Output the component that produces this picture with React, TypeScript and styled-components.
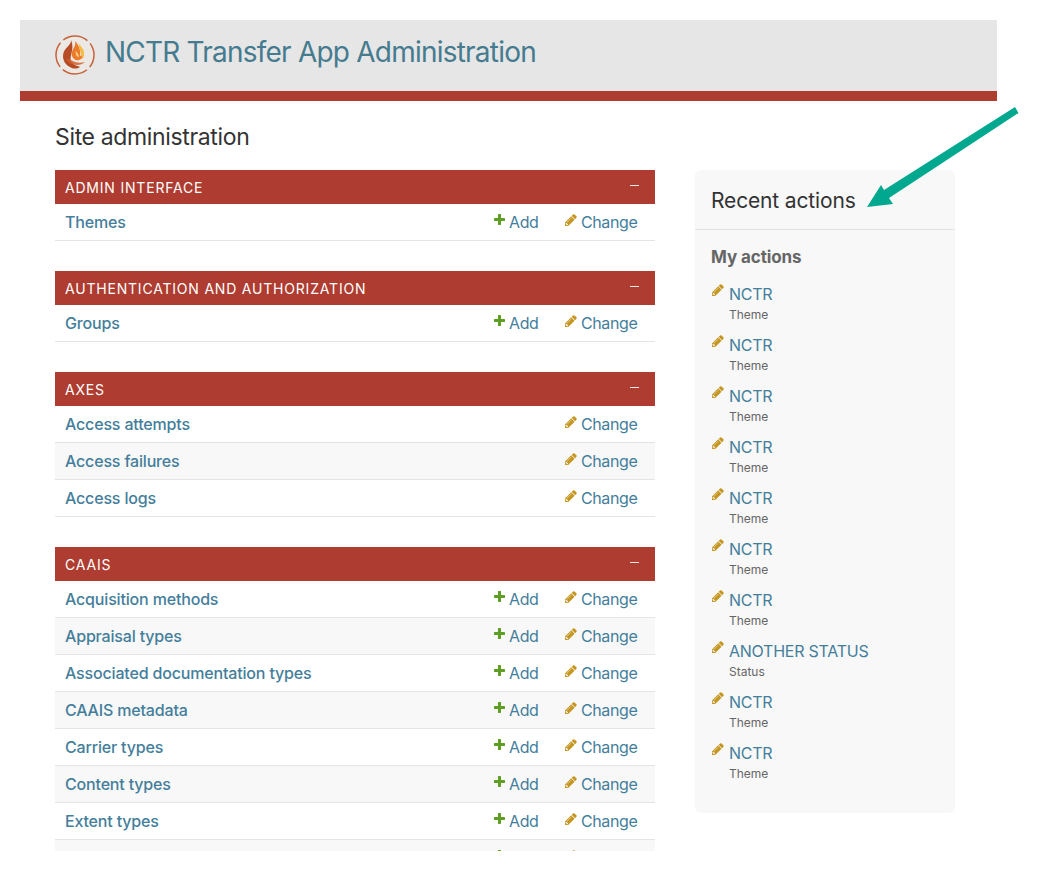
import React from "react";
import styled, { createGlobalStyle } from "styled-components";

const Global = createGlobalStyle`
  html, body { margin: 0; padding: 0; background: #fff; }
  body { font-family: Inter, "Liberation Sans", sans-serif; color: #333; }
  * { box-sizing: border-box; }
`;

const Page = styled.div`
  position: relative;
  width: 1037px;
  height: 871px;
  padding: 20px 40px 20px 20px;
  overflow: hidden;
`;
const Frame = styled.div`
  height: 831px;
  overflow: hidden;
`;
const Header = styled.header`
  height: 81px;
  background: #e6e6e6;
  border-bottom: 10px solid #ae3c30;
  padding: 0 35px;
  display: flex;
  align-items: center;
  gap: 10px;
`;
const Brand = styled.h1`
  margin: -7px 0 0;
  font-size: 28px;
  font-weight: 400;
  letter-spacing: -0.78px;
  color: #457b8f;
  white-space: nowrap;
`;
const LogoMark = styled.svg`
  flex: none;
  margin-top: -1px;
`;
const Content = styled.div`
  padding: 0 35px;
`;
const PageTitle = styled.h2`
  margin: 0;
  height: 69px;
  padding-top: 21px;
  font-size: 23px;
  line-height: 30px;
  font-weight: 400;
  letter-spacing: -0.35px;
  color: #333;
`;
const Columns = styled.div`
  display: flex;
  align-items: flex-start;
  gap: 40px;
`;
const Main = styled.main`
  width: 600px;
  display: flex;
  flex-direction: column;
  gap: 30px;
`;
const ModuleCaption = styled.div`
  height: 34px;
  background: #ae3c30;
  color: #fff;
  padding: 0 10px;
  display: flex;
  align-items: center;
  justify-content: space-between;
  font-size: 14px;
  letter-spacing: 0.8px;
  text-transform: uppercase;
  font-weight: 400;
`;
const Collapse = styled.span`
  width: 9px;
  height: 1px;
  background: #fbe9e6;
  margin-right: 6px;
  margin-top: -3px;
`;
const Row = styled.div<{ $alt: boolean }>`
  height: 37px;
  display: flex;
  align-items: center;
  padding: 0 18px 0 10px;
  background: ${(p) => (p.$alt ? "#f8f8f8" : "#fff")};
  border-bottom: 1px solid #e4e4e4;
  font-size: 16px;
  color: #447e9b;
`;
const RowName = styled.span`
  flex: 1;
  font-weight: 500;
  letter-spacing: -0.17px;
`;
const RowAction = styled.span<{ $w: number }>`
  width: ${(p) => p.$w}px;
  display: flex;
  align-items: center;
  gap: 4px;
  padding-left: 1px;
  letter-spacing: -0.4px;
  & > svg {
    margin-top: -5px;
    flex: none;
  }
`;
const Sidebar = styled.aside`
  width: 260px;
  height: 643px;
  background: #f8f8f8;
  border-radius: 6px;
`;
const SideTitle = styled.h2`
  margin: 0;
  height: 60px;
  padding: 16px 16px 0;
  font-size: 21px;
  line-height: 30px;
  font-weight: 400;
  letter-spacing: -0.15px;
  color: #333;
  border-bottom: 1px solid #e4e4e4;
`;
const SideBody = styled.div`
  padding: 16px 16px 0;
`;
const SideHeading = styled.h3`
  margin: 0 0 14px;
  font-size: 17px;
  line-height: 22px;
  font-weight: 700;
  letter-spacing: -0.1px;
  color: #666;
`;
const ActionList = styled.ul`
  list-style: none;
  margin: 0;
  padding: 0;
`;
const ActionItem = styled.li`
  height: 51px;
  display: flex;
  gap: 5px;
  padding-left: 1px;
  & > svg {
    margin-top: 2px;
    flex: none;
  }
`;
const ActionText = styled.div`
  display: flex;
  flex-direction: column;
`;
const ActionLink = styled.span`
  font-size: 16px;
  line-height: 24px;
  letter-spacing: -0.25px;
  color: #447e9b;
`;
const ActionType = styled.span`
  font-size: 12px;
  line-height: 17px;
  color: #666;
`;
const ArrowLayer = styled.svg`
  position: absolute;
  left: 860px;
  top: 100px;
`;

const Plus = () => (
  <svg width="11" height="11" viewBox="200 200 1400 1400">
    <path fill="#5e9e22" d="M1600 796v192q0 40-28 68t-68 28h-416v416q0 40-28 68t-68 28h-192q-40 0-68-28t-28-68v-416h-416q-40 0-68-28t-28-68v-192q0-40 28-68t68-28h416v-416q0-40 28-68t68-28h192q40 0 68 28t28 68v416h416q40 0 68 28t28 68z" />
  </svg>
);
const Pencil = () => (
  <svg width="12" height="12" viewBox="190 130 1490 1490">
    <path fill="#c4951f" d="M491 1536l91-91-235-235-91 91v107h128v128h107zm523-928q0-22-22-22-10 0-17 7l-542 542q-7 7-7 17 0 22 22 22 10 0 17-7l542-542q7-7 7-17zm-54-192l416 416-832 832h-416v-416zm683 96q0 53-37 90l-166 166-416-416 166-165q36-38 90-38 53 0 91 38l235 234q37 39 37 91z" />
  </svg>
);
const Logo = () => (
  <LogoMark width="40" height="40" viewBox="0 0 40 40">
    <circle cx="20" cy="20" r="19" fill="#ece8e4" stroke="#c8623a" strokeWidth="1.5" strokeDasharray="26 3.8" strokeDashoffset="13" />
    <path fill="#b54c25" d="M16 5c1 5-8 8-8 16 0 5 3 9 7 11 3 2 7 2 10 0-2-1-7-2-9-6-2-5 4-12 0-21z" />
    <path fill="#d2602c" d="M11 24c2 3 6 6 11 6 3 0 6-1 8-3-4 1-9 1-12-1-3-1-5-3-7-2z" opacity=".85" />
    <path fill="#ec7c2c" d="M20 6c2 6-5 9-3 15 1 3 4 5 7 4 3-1 5-3 4-7-1 2-2 3-3 3 1-5-1-11-5-15z" />
    <path fill="#f6bc47" d="M24 9c3 3 6 7 5 11 0 2-1 3-2 4 1-5-4-9-3-15z" />
    <path fill="#fadb85" d="M21 16c1 2 3 4 3 6-2 0-4-3-3-6z" />
  </LogoMark>
);

type M = { title: string; rows: [string, boolean][] };
const modules: M[] = [
  { title: "Admin Interface", rows: [["Themes", true]] },
  { title: "Authentication and Authorization", rows: [["Groups", true]] },
  { title: "Axes", rows: [["Access attempts", false], ["Access failures", false], ["Access logs", false]] },
  {
    title: "CAAIS",
    rows: [
      ["Acquisition methods", true],
      ["Appraisal types", true],
      ["Associated documentation types", true],
      ["CAAIS metadata", true],
      ["Carrier types", true],
      ["Content types", true],
      ["Extent types", true],
      ["", true],
    ],
  },
];
const actions = [
  ["NCTR", "Theme"], ["NCTR", "Theme"], ["NCTR", "Theme"], ["NCTR", "Theme"], ["NCTR", "Theme"],
  ["NCTR", "Theme"], ["NCTR", "Theme"], ["ANOTHER STATUS", "Status"], ["NCTR", "Theme"], ["NCTR", "Theme"],
];

export default function App() {
  return (
    <Page>
      <Global />
      <Frame>
        <Header>
          <Logo />
          <Brand>NCTR Transfer App Administration</Brand>
        </Header>
        <Content>
          <PageTitle>Site administration</PageTitle>
          <Columns>
            <Main>
              {modules.map((m) => (
                <section key={m.title}>
                  <ModuleCaption>
                    {m.title}
                    <Collapse />
                  </ModuleCaption>
                  {m.rows.map(([name, add], i) => (
                    <Row key={i} $alt={i % 2 === 1}>
                      <RowName>{name}</RowName>
                      {add && (
                        <RowAction $w={71}>
                          <Plus />
                          {name && "Add"}
                        </RowAction>
                      )}
                      <RowAction $w={73}>
                        <Pencil />
                        {name && "Change"}
                      </RowAction>
                    </Row>
                  ))}
                </section>
              ))}
            </Main>
            <Sidebar>
              <SideTitle>Recent actions</SideTitle>
              <SideBody>
                <SideHeading>My actions</SideHeading>
                <ActionList>
                  {actions.map(([a, b], i) => (
                    <ActionItem key={i}>
                      <Pencil />
                      <ActionText>
                        <ActionLink>{a}</ActionLink>
                        <ActionType>{b}</ActionType>
                      </ActionText>
                    </ActionItem>
                  ))}
                </ActionList>
              </SideBody>
            </Sidebar>
          </Columns>
        </Content>
      </Frame>
      <ArrowLayer width="170" height="120" viewBox="860 100 170 120">
        <path fill="#00a88f" d="M1015 107L1018.5 113L889 198L893 204L867 207L881 185L884 190Z" />
      </ArrowLayer>
    </Page>
  );
}
